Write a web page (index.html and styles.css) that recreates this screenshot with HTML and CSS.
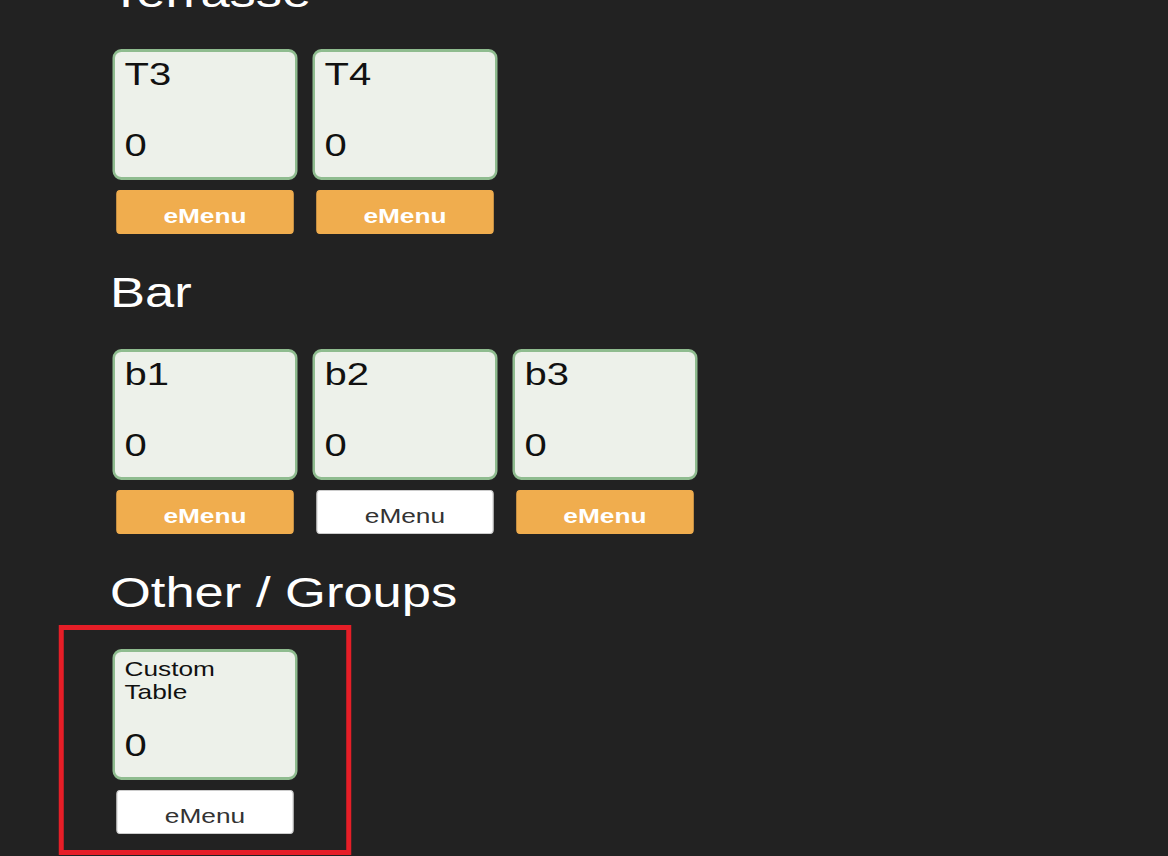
FILE: index.html
```html
<!DOCTYPE html>
<html lang="en">
<head>
    <meta charset="UTF-8">
    <meta name="viewport" content="width=device-width, initial-scale=1.0">
    <title>Tables</title>

    <link rel="stylesheet" href="styles.css">

</head>
<body>
    <div class="page">

        <div class="section">
            <h2 class="section-title">Terrasse</h2>
            <div class="tables">
                <div class="table-cell">
                    <div class="table-card">
                        <div class="table-name">T3</div>
                        <div class="table-count">0</div>
                    </div>
                    <button class="emenu active">eMenu</button>
                </div>
                <div class="table-cell">
                    <div class="table-card">
                        <div class="table-name">T4</div>
                        <div class="table-count">0</div>
                    </div>
                    <button class="emenu active">eMenu</button>
                </div>
            </div>
        </div>

        <div class="section">
            <h2 class="section-title">Bar</h2>
            <div class="tables">
                <div class="table-cell">
                    <div class="table-card">
                        <div class="table-name">b1</div>
                        <div class="table-count">0</div>
                    </div>
                    <button class="emenu active">eMenu</button>
                </div>
                <div class="table-cell">
                    <div class="table-card">
                        <div class="table-name">b2</div>
                        <div class="table-count">0</div>
                    </div>
                    <button class="emenu">eMenu</button>
                </div>
                <div class="table-cell">
                    <div class="table-card">
                        <div class="table-name">b3</div>
                        <div class="table-count">0</div>
                    </div>
                    <button class="emenu active">eMenu</button>
                </div>
            </div>
        </div>

        <div class="section">
            <h2 class="section-title">Other / Groups</h2>
            <div class="tables highlighted">
                <!-- selected group -->
                <div class="highlight"></div>
                <div class="table-cell">
                    <div class="table-card">
                        <div class="table-name small">Custom Table</div>
                        <div class="table-count">0</div>
                    </div>
                    <button class="emenu">eMenu</button>
                </div>
            </div>
        </div>

    </div>
</body>
</html>
```

FILE: styles.css
```css
body
{
    margin: 0;
    overflow: hidden;
    background-color: #222222;
    font-family: "Liberation Sans", Arial, sans-serif;
    color: white;
}
/* the page is shown stretched sideways */
.page
{
    width: 800px;
    margin-top: -31px;
    padding-left: 88px;
    transform: scaleX(1.25);
    transform-origin: left top;
}
.section
{
    margin-bottom: 35px;
}
.section-title
{
    margin: 0 0 32px 0;
    font-size: 42px;
    line-height: 48px;
    font-weight: normal;
    color: white;
}
.tables
{
    display: flex;
    gap: 11.2px;
    margin-left: 1.6px;
}
.tables.highlighted
{
    position: relative;
}
.highlight
{
    position: absolute;
    left: -42.4px;
    top: -24px;
    width: 233.6px;
    height: 230px;
    border-style: solid;
    border-color: #e61e27;
    border-width: 5px 4px;
    box-sizing: border-box;
    pointer-events: none;
}
.table-cell
{
    width: 148.8px;
}
.table-card
{
    height: 131px;
    box-sizing: border-box;
    display: flex;
    flex-direction: column;
    justify-content: space-between;
    padding: 4px 8px 14px 8px;
    background-color: #edf1ea;
    border-style: solid;
    border-color: #8fbc8f;
    border-width: 3px 2.4px;
    border-radius: 7px / 9px;
    color: #111;
}
.table-name
{
    font-size: 32px;
    line-height: 36px;
}
.table-name.small
{
    width: 100px;
    font-size: 21px;
    line-height: 23px;
    padding-top: 1px;
}
.table-count
{
    font-size: 32px;
    line-height: 36px;
}
.emenu
{
    display: block;
    width: calc(100% - 6.4px);
    margin: 10px 3.2px 0 3.2px;
    height: 44px;
    padding: 13px 0 5px 0;
    box-sizing: border-box;
    font-family: "Liberation Sans", Arial, sans-serif;
    font-size: 21px;
    line-height: 24px;
    color: #333;
    background-color: white;
    border: 1px solid #cccccc;
    border-radius: 3px / 4px;
    cursor: pointer;
}
.emenu.active
{
    color: white;
    font-weight: bold;
    background-color: #f0ad4e;
    border-color: #f0ad4e;
}
```
